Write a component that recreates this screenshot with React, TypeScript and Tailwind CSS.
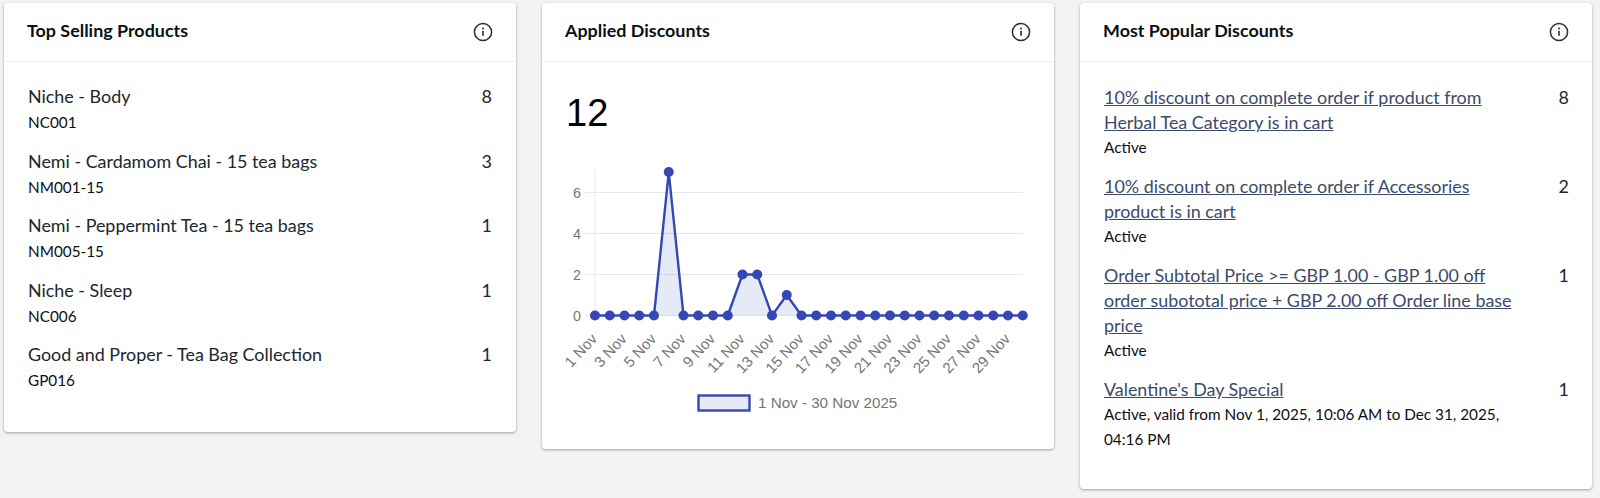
const products = [
  { name: "Niche - Body", sku: "NC001", count: 8 },
  { name: "Nemi - Cardamom Chai - 15 tea bags", sku: "NM001-15", count: 3 },
  { name: "Nemi - Peppermint Tea - 15 tea bags", sku: "NM005-15", count: 1 },
  { name: "Niche - Sleep", sku: "NC006", count: 1 },
  { name: "Good and Proper - Tea Bag Collection", sku: "GP016", count: 1 },
];

const discounts = [
  { name: "10% discount on complete order if product from Herbal Tea Category is in cart", status: "Active", count: 8 },
  { name: "10% discount on complete order if Accessories product is in cart", status: "Active", count: 2 },
  { name: "Order Subtotal Price >= GBP 1.00 - GBP 1.00 off order subototal price + GBP 2.00 off Order line base price", status: "Active", count: 1 },
  { name: "Valentine's Day Special", status: "Active, valid from Nov 1, 2025, 10:06 AM to Dec 31, 2025, 04:16 PM", count: 1 },
];

const values = [0, 0, 0, 0, 0, 7, 0, 0, 0, 0, 2, 2, 0, 1, 0, 0, 0, 0, 0, 0, 0, 0, 0, 0, 0, 0, 0, 0, 0, 0];
const X0 = 53;
const STEP = 14.75;
const Y0 = 166.5;
const UNIT = 20.5;
const px = (i: number) => X0 + i * STEP;
const py = (v: number) => Y0 - v * UNIT;

function InfoIcon() {
  return (
    <svg width="20" height="20" viewBox="0 0 20 20" fill="none" className="shrink-0">
      <circle cx="10" cy="10" r="8.6" stroke="#2b2f36" strokeWidth="1.5" />
      <circle cx="10" cy="6.6" r="1" fill="#2b2f36" />
      <rect x="9.2" y="8.8" width="1.6" height="5" fill="#2b2f36" />
    </svg>
  );
}

function Card({ title, children }: { title: string; children: React.ReactNode }) {
  return (
    <section className="w-[512px] shrink-0 rounded-[4px] bg-white shadow-[0_1px_3px_rgba(0,0,0,0.35)]">
      <header className="flex h-[59px] items-center justify-between border-b border-[#ebedf0] pl-[23px] pr-[23px]">
        <h2 className="pb-[4px] text-[17.9px] font-bold text-[#0b0f14]">{title}</h2>
        <InfoIcon />
      </header>
      {children}
    </section>
  );
}

function Chart() {
  const line = values.map((v, i) => `${px(i)},${py(v)}`).join(" ");
  const area = `${px(0)},${Y0} ${line} ${px(29)},${Y0}`;
  return (
    <svg width="512" height="300" viewBox="0 0 512 300" className="block">
      <line x1={X0} y1={21} x2={X0} y2={172} stroke="#e8e8e8" />
      {[0, 2, 4, 6].map((v) => (
        <g key={v}>
          <line x1={43} y1={py(v)} x2={px(29)} y2={py(v)} stroke="#e8e8e8" />
          <text x={39} y={py(v) + 5} textAnchor="end" fontSize="14.3" fill="#757575" fontFamily="Liberation Sans, sans-serif">{v}</text>
        </g>
      ))}
      <polygon points={area} fill="#3547b5" fillOpacity="0.12" />
      <polyline points={line} fill="none" stroke="#3547b5" strokeWidth="2.4" />
      {values.map((v, i) => (
        <circle key={i} cx={px(i)} cy={py(v)} r="5" fill="#3547b5" />
      ))}
      {Array.from({ length: 15 }, (_, k) => k * 2).map((i) => (
        <text
          key={i}
          transform={`translate(${px(i) + 3},${Y0 + 24}) rotate(-47)`}
          textAnchor="end"
          fontSize="15"
          fill="#757575"
          fontFamily="Liberation Sans, sans-serif"
        >
          {i + 1} Nov
        </text>
      ))}
      <rect x={156.5} y={246.5} width={51} height={15} fill="#3547b5" fillOpacity="0.12" stroke="#3547b5" strokeWidth="2.4" />
      <text x={216} y={259} fontSize="15.2" fill="#757575" fontFamily="Liberation Sans, sans-serif">1 Nov - 30 Nov 2025</text>
    </svg>
  );
}

export default function App() {
  return (
    <div className="flex h-[498px] items-start gap-[26px] overflow-hidden bg-[#f2f3f5] pl-[4px] pt-[3px] font-['Lato','Noto_Sans',sans-serif] text-[#20262e]">
      <Card title="Top Selling Products">
        <ul className="flex flex-col gap-[14px] pb-[39px] pl-[24px] pr-[24px] pt-[22px]">
          {products.map((p) => (
            <li key={p.sku} className="flex justify-between">
              <div>
                <div className="text-[17.9px] leading-[24.5px]">{p.name}</div>
                <div className="pt-[1.5px] text-[15.3px] leading-[24.5px] text-[#0b0f14]">{p.sku}</div>
              </div>
              <span className="text-[17.9px] leading-[24.5px]">{p.count}</span>
            </li>
          ))}
        </ul>
      </Card>
      <Card title="Applied Discounts">
        <div className="pl-[24px] pt-[27px] font-['Liberation_Sans',sans-serif] text-[38px] leading-[48px] text-black">12</div>
        <div className="pt-[12px]">
          <Chart />
        </div>
      </Card>
      <Card title="Most Popular Discounts">
        <ul className="flex flex-col gap-[14px] pb-[37px] pl-[24px] pr-[23px] pt-[23px]">
          {discounts.map((d) => (
            <li key={d.name} className="flex justify-between gap-[24px]">
              <div className="w-[420px]">
                <a href="#" className="text-[17.9px] leading-[25px] text-[#3c4a6b] underline">{d.name}</a>
                <div className="text-[15.3px] leading-[25px] text-[#0b0f14]">{d.status}</div>
              </div>
              <span className="text-[17.9px] leading-[25px]">{d.count}</span>
            </li>
          ))}
        </ul>
      </Card>
    </div>
  );
}
